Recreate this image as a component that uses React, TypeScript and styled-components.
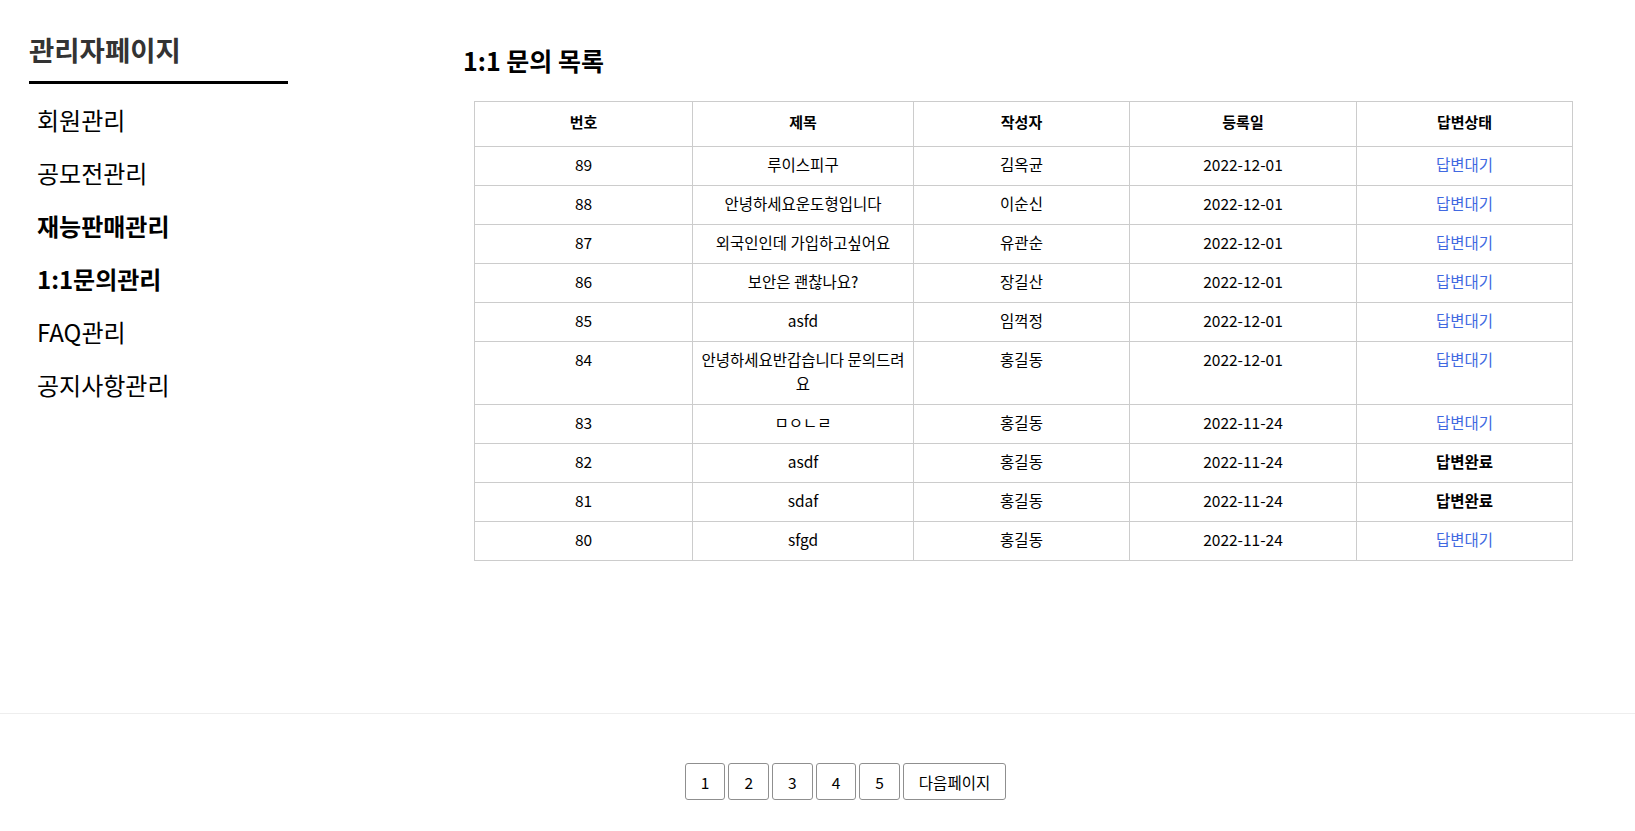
import React, { ReactElement } from 'react';
import styled, { createGlobalStyle } from 'styled-components';

const GlobalStyle = createGlobalStyle`
  body {
    margin: 0;
    background: #fff;
    color: #000;
    font-family: 'Noto Sans CJK KR', 'Noto Sans', sans-serif;
  }
`;

const Top = styled.div`
  display: flex;
  min-height: 714px;
  border-bottom: 1px solid #eee;
  box-sizing: border-box;
`;

const Sidebar = styled.nav`
  width: 259px;
  margin-left: 29px;
  padding-top: 32px;
  flex-shrink: 0;
`;

const SideTitle = styled.h2`
  margin: 0;
  font-size: 27.5px;
  line-height: 34px;
  font-weight: 700;
  color: #333;
  padding-bottom: 15px;
  border-bottom: 3px solid #000;
`;

const Menu = styled.ul`
  list-style: none;
  margin: 9px 0 0;
  padding: 0 0 0 8px;
`;

const MenuItem = styled.li<{ $bold?: boolean }>`
  font-size: 24px;
  line-height: 53px;
  font-weight: ${(p) => (p.$bold ? 700 : 400)};
  cursor: pointer;
`;

const Main = styled.main`
  flex: 1;
  margin-left: 175px;
  padding: 43px 63px 0 0;
`;

const Title = styled.h1`
  margin: 0 0 24px;
  font-size: 25px;
  line-height: 34px;
  font-weight: 700;
`;

const Table = styled.table`
  margin-left: 11px;
  width: calc(100% - 11px);
  border-collapse: collapse;
  table-layout: fixed;
  font-size: 15.5px;
  line-height: 24px;

  th,
  td {
    border: 1px solid #ccc;
    text-align: center;
    vertical-align: top;
  }

  th {
    padding: 8px 8px 12px;
    font-size: 15px;
    font-weight: 700;
  }

  td {
    padding: 5px 8px 9px;
  }
`;

const Status = styled.span<{ $done: boolean }>`
  color: ${(p) => (p.$done ? '#000' : '#4169e1')};
  font-weight: ${(p) => (p.$done ? 700 : 400)};
`;

const Pager = styled.div`
  display: flex;
  justify-content: center;
  gap: 3px;
  padding: 49px 0 0 56px;
`;

const PageButton = styled.button`
  height: 37px;
  padding: 0 15px;
  background: #fff;
  border: 1px solid #8f8f8f;
  border-radius: 3px;
  font-family: 'Noto Sans CJK KR', 'Noto Sans', sans-serif;
  font-size: 15.5px;
  color: #000;
  cursor: pointer;
`;

const rows = [
  { no: 89, title: '루이스피구', writer: '김옥균', date: '2022-12-01', done: false },
  { no: 88, title: '안녕하세요운도형입니다', writer: '이순신', date: '2022-12-01', done: false },
  { no: 87, title: '외국인인데 가입하고싶어요', writer: '유관순', date: '2022-12-01', done: false },
  { no: 86, title: '보안은 괜찮나요?', writer: '장길산', date: '2022-12-01', done: false },
  { no: 85, title: 'asfd', writer: '임꺽정', date: '2022-12-01', done: false },
  { no: 84, title: '안녕하세요반갑습니다 문의드려요', writer: '홍길동', date: '2022-12-01', done: false },
  { no: 83, title: 'ㅁㅇㄴㄹ', writer: '홍길동', date: '2022-11-24', done: false },
  { no: 82, title: 'asdf', writer: '홍길동', date: '2022-11-24', done: true },
  { no: 81, title: 'sdaf', writer: '홍길동', date: '2022-11-24', done: true },
  { no: 80, title: 'sfgd', writer: '홍길동', date: '2022-11-24', done: false },
];

const menus = [
  { label: '회원관리', bold: false },
  { label: '공모전관리', bold: false },
  { label: '재능판매관리', bold: true },
  { label: '1:1문의관리', bold: true },
  { label: 'FAQ관리', bold: false },
  { label: '공지사항관리', bold: false },
];

export default function App(): ReactElement {
  return (
    <>
      <GlobalStyle />
      <Top>
        <Sidebar>
          <SideTitle>관리자페이지</SideTitle>
          <Menu>
            {menus.map((m) => (
              <MenuItem key={m.label} $bold={m.bold}>
                {m.label}
              </MenuItem>
            ))}
          </Menu>
        </Sidebar>
        <Main>
          <Title>1:1 문의 목록</Title>
          <Table>
            <colgroup>
              <col style={{ width: 218 }} />
              <col style={{ width: 221 }} />
              <col style={{ width: 216 }} />
              <col style={{ width: 227 }} />
              <col style={{ width: 216 }} />
            </colgroup>
            <thead>
              <tr>
                <th>번호</th>
                <th>제목</th>
                <th>작성자</th>
                <th>등록일</th>
                <th>답변상태</th>
              </tr>
            </thead>
            <tbody>
              {rows.map((r) => (
                <tr key={r.no}>
                  <td>{r.no}</td>
                  <td>{r.title}</td>
                  <td>{r.writer}</td>
                  <td>{r.date}</td>
                  <td>
                    <Status $done={r.done}>{r.done ? '답변완료' : '답변대기'}</Status>
                  </td>
                </tr>
              ))}
            </tbody>
          </Table>
        </Main>
      </Top>
      <Pager>
        {[1, 2, 3, 4, 5].map((n) => (
          <PageButton key={n}>{n}</PageButton>
        ))}
        <PageButton>다음페이지</PageButton>
      </Pager>
    </>
  );
}
